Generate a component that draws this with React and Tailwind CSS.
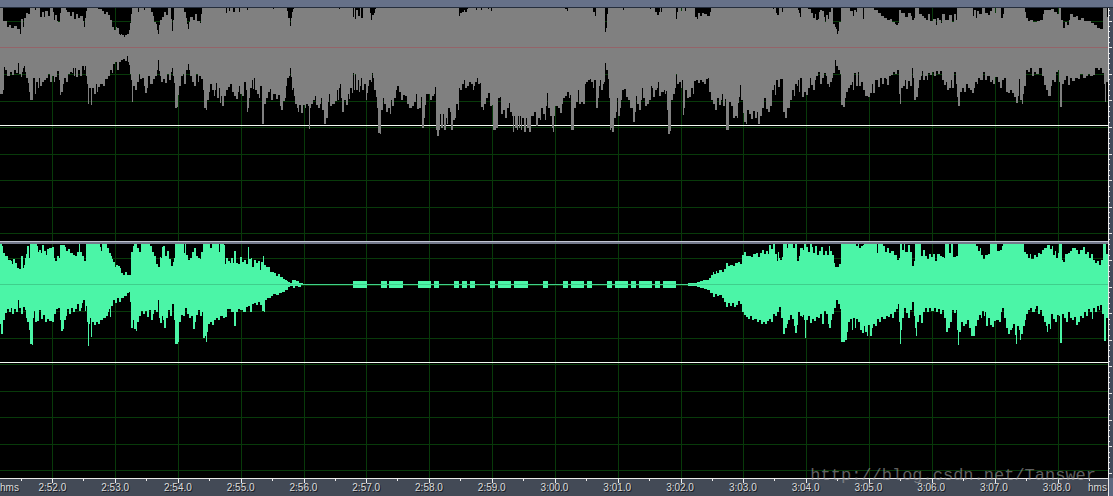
import React from "react";

// Envelope edges: "x y" pairs, each level holds until the next x
const leftTop = `0 8,3 21,7 27,9 25,11 28,14 26,17 29,20 34,21 19,23 27,24 18,26 13,28 14,30 8,35 10,36 8,40 17,42 12,44 17,45 11,48 16,50 8,53 12,54 20,55 15,57 21,58 22,60 13,61 8,
66 10,67 12,70 16,72 12,74 19,76 14,78 18,80 16,83 21,84 27,85 18,86 11,87 8,98 9,102 11,104 14,106 12,108 15,110 20,112 27,114 30,116 27,117 28,119 34,120 35,121 34,122 35,124 37,125 35,127 34,129 30,130 23,131 14,132 8,
138 12,139 8,144 10,145 8,151 12,153 16,154 22,156 24,157 30,158 34,159 25,160 20,162 17,164 12,166 15,168 8,171 19,172 31,173 20,174 8,184 12,186 18,187 24,188 29,189 22,190 17,193 20,195 14,197 21,200 23,201 14,202 8,
226 13,227 8,229 11,230 8,233 12,235 8,239 12,240 8,247 10,248 8,273 9,274 8,287 11,288 18,290 26,291 18,292 12,293 9,294 8,339 9,340 8,353 17,354 8,355 19,356 10,358 16,360 8,361 18,363 8,370 13,371 20,372 15,374 13,375 9,376 8,
459 16,460 13,462 12,464 10,465 12,467 9,468 8,476 10,477 8,481 10,482 8,488 9,489 8,491 11,492 8,565 9,567 11,568 8,593 12,595 16,596 8,605 32,606 28,607 14,608 8,623 10,624 8,650 9,651 8,655 12,657 15,659 12,660 8,661 12,662 8,
676 19,677 12,678 8,681 11,682 8,685 11,686 8,695 17,697 19,698 13,700 16,702 13,704 14,707 16,710 12,711 8,773 9,774 8,776 13,777 15,779 8,782 12,783 8,798 10,799 13,800 17,801 8,808 9,811 13,813 18,815 14,816 20,818 19,819 12,820 10,
822 11,824 17,825 22,826 15,828 19,829 12,831 8,833 24,835 27,836 29,837 34,838 31,839 22,841 8,850 11,853 16,854 10,856 12,857 8,863 19,864 8,874 10,878 13,881 16,884 18,887 20,890 19,892 22,895 24,896 25,898 23,899 10,901 13,905 17,
908 13,911 16,912 20,914 18,915 8,919 14,922 16,924 18,926 20,928 14,930 21,933 19,936 25,937 18,939 20,941 23,942 14,945 20,949 15,952 22,954 14,956 20,957 8,973 16,974 10,976 18,977 11,979 14,982 8,985 13,988 15,990 11,992 8,995 13,996 8,
1001 18,1003 14,1004 8,1025 12,1026 18,1028 21,1030 20,1033 22,1037 21,1040 20,1043 14,1044 10,1051 9,1054 12,1057 14,1059 8,1061 20,1063 28,1065 22,1067 25,1069 20,1070 14,1073 17,1076 16,1078 20,1081 18,1084 21,1088 21,1091 23,1094 25,
1097 28,1100 29,1103 8,1107 17`;

const leftBottom = `0 94,3 90,4 67,5 70,7 76,10 72,12 75,14 70,16 73,18 63,19 74,21 77,22 72,23 68,24 66,25 72,26 78,28 83,29 92,30 100,33 78,35 94,36 82,38 88,39 78,40 86,42 82,44 80,46 78,48 74,50 82,52 76,54 82,55 77,57 71,59 80,60 95,61 92,
63 84,64 78,66 82,68 74,70 72,72 73,73 68,74 76,75 68,76 77,78 70,80 76,82 66,84 70,85 66,86 76,87 84,88 104,89 88,91 105,92 88,94 94,96 84,97 92,98 87,100 84,103 86,105 79,108 76,110 70,112 73,113 64,115 62,117 70,119 62,121 60,123 59,
125 61,127 56,128 62,129 65,130 74,131 80,132 102,133 86,135 90,137 82,139 74,140 79,142 78,144 86,145 93,147 88,148 76,150 84,153 79,155 76,157 70,158 60,159 71,160 76,161 82,163 79,165 83,167 74,169 80,171 72,172 68,173 76,174 83,
175 108,177 107,178 95,179 86,181 76,183 74,184 84,186 70,188 64,189 70,190 76,192 82,194 86,196 74,198 82,199 76,201 79,203 90,204 108,206 110,207 100,209 92,210 84,212 90,214 96,215 90,216 83,217 98,219 88,220 103,221 96,222 106,
224 96,226 90,228 87,230 84,232 92,234 96,236 99,238 92,239 86,240 94,242 96,244 82,246 90,247 112,248 108,249 98,250 88,252 80,253 89,254 78,255 90,257 94,259 98,260 86,262 124,264 104,266 98,268 92,270 89,271 100,273 94,276 99,278 95,
280 106,281 110,283 101,285 98,286 86,287 78,289 76,290 68,291 77,292 90,293 88,294 96,295 104,297 108,298 112,299 105,301 113,303 105,305 108,306 104,308 106,309 129,310 108,311 104,313 100,315 96,316 105,318 108,320 104,321 98,322 110,
324 124,326 118,328 102,329 94,330 106,332 104,335 101,337 90,338 100,339 88,340 84,341 98,342 112,344 100,346 105,348 94,349 99,350 88,352 93,353 73,354 90,355 74,356 90,358 80,359 92,360 86,361 78,362 90,364 84,366 100,367 93,368 86,
369 80,371 82,372 73,373 78,374 90,376 97,377 108,378 133,380 134,381 110,383 98,384 104,386 112,388 108,390 114,391 100,392 106,394 98,396 90,397 86,399 92,401 100,403 95,405 96,407 104,409 108,412 106,414 102,416 94,417 109,419 108,
421 97,422 128,424 118,425 105,426 94,428 94,430 100,432 96,434 94,435 87,436 130,437 136,439 130,440 114,441 128,443 114,444 130,446 118,447 124,448 108,450 112,451 130,453 120,455 118,456 104,458 110,459 88,460 90,462 84,464 80,465 88,
467 86,469 82,471 84,473 90,474 86,475 82,477 78,478 84,480 83,481 107,483 110,484 104,486 98,488 93,490 106,492 105,493 130,496 128,498 98,500 97,501 114,503 110,505 118,507 108,509 103,510 112,512 116,513 132,514 116,515 128,517 130,
518 116,519 128,520 116,521 130,522 118,524 132,526 118,527 128,529 132,531 116,533 116,534 112,536 126,538 118,540 120,541 108,543 114,545 120,546 106,547 93,548 108,550 116,552 128,553 132,554 116,555 106,558 108,560 113,562 104,
563 98,565 96,567 92,569 98,570 95,571 130,573 130,574 108,576 102,578 90,579 104,581 102,583 104,585 84,586 82,588 80,590 79,591 82,593 88,594 80,596 108,598 98,599 86,600 80,601 90,603 84,604 82,605 63,606 70,608 79,609 98,610 130,
611 128,612 132,614 118,616 112,617 98,618 116,620 108,621 100,622 90,624 89,626 97,628 100,630 108,633 122,635 112,636 96,637 104,639 110,641 100,642 88,643 98,645 106,647 104,649 100,651 86,652 88,653 97,655 90,657 88,658 82,659 96,
661 92,664 90,665 94,666 91,667 110,668 134,670 131,671 100,673 94,675 88,676 74,677 84,679 82,681 88,682 80,683 115,684 108,685 90,687 98,689 97,691 88,693 94,694 81,696 80,698 83,700 80,702 82,704 84,706 79,708 78,709 92,711 100,
713 104,715 110,717 98,719 105,721 100,722 94,723 106,725 99,726 130,728 130,729 102,731 106,733 118,735 116,737 118,738 103,739 97,740 85,741 100,743 113,744 122,746 124,747 110,749 114,751 119,753 111,755 118,757 112,758 124,760 116,
762 108,764 98,766 109,768 112,770 106,772 90,774 85,775 95,776 80,778 87,780 79,783 112,785 118,787 108,790 100,792 90,794 96,795 84,797 86,798 80,799 92,800 78,802 97,804 92,806 95,808 88,810 78,811 85,813 90,815 80,816 76,818 72,
820 84,822 78,824 73,826 76,827 84,829 87,830 82,832 78,833 73,835 60,836 66,838 70,840 74,841 105,843 107,845 98,846 92,848 88,850 85,852 82,853 90,854 73,856 86,858 72,859 86,861 82,863 90,865 96,868 97,870 93,872 84,873 93,875 80,
878 87,880 78,882 84,884 78,886 79,887 85,889 76,891 75,893 72,895 74,897 70,899 94,900 104,901 88,903 86,905 80,906 89,908 81,910 86,912 68,913 78,914 100,916 97,918 88,919 80,921 76,922 71,923 80,925 76,927 80,928 73,930 75,932 72,
934 76,936 71,938 74,940 71,942 80,944 85,946 82,947 90,949 88,951 80,952 88,954 72,956 84,957 97,958 106,960 92,962 88,964 92,966 84,968 88,970 90,972 93,974 88,975 82,977 84,978 78,980 80,983 72,985 80,987 76,990 82,992 80,993 84,
995 77,998 82,1000 88,1002 80,1004 78,1006 92,1008 93,1010 90,1012 93,1014 97,1016 103,1018 96,1019 79,1020 100,1022 104,1023 94,1024 86,1026 70,1028 72,1030 68,1032 76,1034 72,1036 74,1039 68,1042 76,1044 85,1046 90,1048 96,1051 86,
1052 80,1054 82,1056 72,1058 70,1059 82,1060 107,1062 84,1064 80,1066 76,1068 85,1070 78,1072 81,1075 78,1078 79,1080 74,1083 78,1086 76,1088 74,1090 76,1093 75,1095 68,1098 70,1100 68,1102 73,1104 84,1105 102,1106 82`;

const rightTop = `0 244,2 246,3 253,5 256,8 260,11 261,12 264,13 259,15 263,17 268,19 269,21 256,23 268,24 265,25 258,26 254,27 246,29 258,30 244,37 246,38 252,39 250,41 253,42 245,44 251,46 255,47 249,49 248,52 247,54 258,55 261,57 256,59 258,60 245,
65 247,66 251,68 249,70 253,73 255,75 256,77 252,79 244,80 252,82 256,84 261,86 244,100 247,101 251,102 244,107 248,109 253,111 256,112 259,113 262,115 267,116 265,118 266,120 268,121 273,123 275,125 272,127 275,131 252,133 246,134 244,
137 248,139 252,141 244,150 246,152 252,154 256,156 264,158 267,160 257,161 258,162 247,163 246,165 256,167 251,169 259,171 266,173 262,174 258,175 244,184 253,185 244,186 255,188 260,190 258,192 252,194 248,196 256,198 258,200 259,
201 252,203 244,210 248,212 244,219 252,220 244,224 245,225 264,226 258,228 261,230 263,231 258,233 263,234 251,236 263,238 264,240 257,242 262,244 260,246 264,248 247,249 259,251 258,252 267,254 260,256 263,258 261,260 270,261 262,
263 256,264 265,266 267,270 272,274 273,276 276,278 274,280 277,283 279,285 280,287 281,288 282,290 283,292 280,296 281,299 283,303 284,688 283,697 282,700 281,703 280,709 278,711 275,713 272,714 274,716 271,717 273,719 270,722 272,
724 269,726 263,728 266,730 265,733 266,735 263,738 262,740 264,742 255,744 252,746 256,751 257,753 254,756 253,758 257,760 253,762 250,764 254,766 251,768 254,769 245,771 249,773 244,775 254,777 261,778 252,779 258,780 260,782 257,
783 244,787 248,788 244,793 248,795 244,797 261,799 256,800 248,803 250,804 244,806 247,808 252,810 244,812 247,813 253,815 246,817 255,819 251,821 247,823 255,825 251,827 255,829 246,830 251,832 255,834 263,835 267,839 264,841 244,
856 246,858 244,859 248,861 246,863 245,864 244,877 253,878 244,883 246,885 252,887 248,889 253,891 251,894 255,897 260,899 258,900 244,902 250,904 244,905 252,908 245,910 252,912 266,914 261,915 244,921 256,923 250,925 256,927 259,
929 254,931 257,933 254,935 261,937 254,940 256,942 257,944 258,945 244,949 253,951 244,953 257,956 256,958 244,976 246,978 251,980 248,981 255,983 259,985 255,988 254,990 244,997 251,1000 250,1002 246,1003 244,1024 252,1026 254,
1028 258,1030 254,1031 259,1034 255,1036 257,1038 253,1040 254,1042 250,1044 248,1047 245,1050 249,1052 246,1053 255,1055 251,1056 258,1058 253,1059 244,1062 260,1063 262,1065 254,1068 253,1070 251,1072 248,1076 250,1078 254,1080 250,
1083 247,1085 254,1087 252,1089 258,1091 254,1093 260,1095 263,1097 261,1099 265,1101 260,1103 244,1106 254`;

const rightBottom = `0 324,1 334,3 320,5 313,7 309,9 312,11 308,12 314,14 309,16 312,18 300,19 308,21 314,23 307,25 310,26 318,27 322,29 330,30 344,32 345,33 318,34 311,35 322,37 321,39 310,41 319,43 315,45 322,47 319,49 321,52 322,54 314,56 309,58 308,
60 320,61 331,63 329,64 320,66 316,67 309,69 314,71 308,73 312,75 309,77 304,79 311,81 308,82 303,83 300,85 311,86 306,87 322,88 346,89 324,90 318,91 337,92 322,94 325,96 322,98 324,100 320,103 318,106 316,108 312,109 309,110 317,111 306,
113 300,115 303,117 298,119 302,121 298,124 296,127 293,129 292,130 302,131 328,133 320,134 329,136 331,137 322,139 316,141 311,143 314,145 311,147 317,149 310,151 320,153 314,154 310,156 312,158 300,159 318,160 323,162 316,163 320,
164 328,166 318,168 310,170 316,172 304,174 320,175 344,178 342,179 322,181 315,183 316,185 308,187 314,189 318,191 316,193 329,195 322,196 315,198 310,200 316,202 312,203 338,205 336,206 342,207 332,208 324,210 322,212 325,214 320,
216 318,218 320,220 316,223 318,225 317,227 309,231 312,234 326,236 312,238 309,240 310,243 312,246 307,248 306,250 312,252 304,254 303,256 305,258 302,260 305,262 311,264 312,265 300,267 298,271 296,273 294,276 295,279 293,282 292,
285 290,288 287,290 286,293 288,295 286,298 287,301 285,688 286,697 287,700 288,704 289,707 290,710 293,713 297,715 294,717 296,719 295,722 298,724 302,726 307,728 303,730 306,732 303,734 307,736 305,738 301,740 304,742 312,744 315,
746 317,748 319,750 316,752 320,754 319,757 322,759 320,761 324,763 322,765 324,767 321,769 319,771 322,773 314,775 316,777 312,779 307,781 318,783 334,785 328,787 324,788 320,790 315,792 319,794 326,795 333,797 325,798 312,800 316,
802 317,803 315,804 320,805 338,806 320,808 316,810 323,812 319,814 321,816 317,818 318,820 314,822 324,824 311,826 314,828 324,829 328,831 320,832 314,834 308,836 300,838 304,840 309,841 342,845 340,847 332,848 322,850 319,852 330,
853 318,855 328,856 319,858 322,860 330,862 333,864 326,865 332,867 336,868 325,870 336,872 328,873 324,875 326,877 319,879 322,881 317,883 319,886 316,888 317,890 314,892 318,894 312,896 309,898 304,899 322,900 344,901 330,902 318,
904 308,906 313,908 318,910 310,912 302,914 316,915 328,916 336,917 322,919 315,921 323,923 312,925 308,927 312,929 308,931 311,934 308,936 312,938 309,940 314,942 310,944 318,946 332,948 328,950 322,952 310,954 313,956 310,957 330,
958 345,959 332,961 322,963 326,965 324,967 320,969 328,971 336,975 326,977 320,979 315,981 318,982 311,984 316,985 312,986 326,988 318,990 325,992 327,994 321,996 320,999 322,1001 312,1002 308,1004 318,1006 328,1008 334,1010 330,
1012 328,1013 324,1015 335,1016 344,1017 326,1019 330,1020 340,1021 334,1023 326,1025 320,1026 314,1028 310,1030 308,1032 312,1035 309,1036 306,1038 314,1040 310,1042 316,1044 322,1046 326,1047 332,1048 324,1050 329,1051 314,1053 319,
1055 322,1057 315,1059 316,1060 343,1062 314,1064 318,1066 322,1068 312,1070 318,1072 320,1074 317,1076 325,1078 322,1080 316,1082 318,1084 312,1086 316,1088 309,1090 312,1092 319,1093 308,1095 312,1097 306,1099 310,1100 305,1102 314,
1104 341,1106 318`;

// Low-level bursts in the quiet part of the right channel: [start, end]
const bursts = [
  [353, 367], [381, 387], [389, 403], [418, 431], [434, 439], [454, 459], [462, 467],
  [470, 475], [490, 495], [498, 511], [514, 528], [543, 548], [563, 568], [571, 584],
  [587, 592], [607, 612], [615, 628], [631, 636], [639, 652], [655, 660], [663, 676],
];

const times = [
  "2:52.0", "2:53.0", "2:54.0", "2:55.0", "2:56.0", "2:57.0", "2:58.0", "2:59.0", "3:00.0",
  "3:01.0", "3:02.0", "3:03.0", "3:04.0", "3:05.0", "3:06.0", "3:07.0", "3:08.0",
];

const WIDTH = 1108;
const secondX = (i) => Math.round(52.2 + i * 62.84);
const levelY = (i) => Math.round(21 + i * 26.55);

const parse = (text) => text.split(",").map((pair) => pair.trim().split(" ").map(Number));

function envelopePath(topText, bottomText) {
  const top = parse(topText);
  const bottom = parse(bottomText);
  let d = `M0 ${top[0][1]}`;
  top.forEach(([x, y]) => {
    d += `H${x}V${y}`;
  });
  d += `H${WIDTH}V${bottom[bottom.length - 1][1]}`;
  for (let i = bottom.length - 1; i > 0; i--) {
    d += `H${bottom[i][0]}V${bottom[i - 1][1]}`;
  }
  return d + "H0Z";
}

function Grid({ top, height, offset }) {
  return (
    <g fill="#083a0a">
      {times.map((time, i) => (
        <rect key={time} x={secondX(i)} y={top} width="1" height={height} />
      ))}
      {[0, 1, 2, 3, 4, 5, 6, 7, 8].map((i) => (
        <rect key={i} x="0" y={levelY(i) + offset} width={WIDTH} height="1" />
      ))}
    </g>
  );
}

function LeftChannel() {
  return (
    <svg
      className="block w-full h-[233px] bg-black"
      viewBox="0 8 1108 233"
      preserveAspectRatio="none"
      shapeRendering="crispEdges"
      role="img"
      aria-label="Left channel"
    >
      <Grid top={8} height={233} offset={0} />
      <rect x="0" y="125" width={WIDTH} height="1" fill="#f4fbf4" />
      <path d={envelopePath(leftTop, leftBottom)} fill="#808080" />
      <rect x="0" y="47" width={WIDTH} height="1" fill="#946469" />
    </svg>
  );
}

function RightChannel() {
  return (
    <svg
      className="block w-full h-[234px] bg-black"
      viewBox="0 244 1108 234"
      preserveAspectRatio="none"
      shapeRendering="crispEdges"
      role="img"
      aria-label="Right channel"
    >
      <Grid top={244} height={234} offset={237} />
      <rect x="0" y="362" width={WIDTH} height="1" fill="#f4fbf4" />
      <path d={envelopePath(rightTop, rightBottom)} fill="#4bf5a7" />
      {bursts.map(([start, end]) => (
        <rect key={start} x={start} y="281" width={end - start} height="7" fill="#4bf5a7" />
      ))}
      <rect x="0" y="284" width={WIDTH} height="1" fill="#3fcf8c" />
    </svg>
  );
}

function TimeRuler() {
  return (
    <div className="h-[18px] overflow-hidden border-t border-[#e8e8e8] bg-[#434a56]">
      <svg
        className="block w-full h-[4px]"
        viewBox="0 0 1108 4"
        preserveAspectRatio="none"
        shapeRendering="crispEdges"
        fill="#f0f0f0"
      >
        <rect x="21" y="0" width="1" height="2" />
        {times.map((time, i) => (
          <g key={time}>
            <rect x={secondX(i)} y="0" width="1" height="4" />
            <rect x={secondX(i) + 31} y="0" width="1" height="2" />
          </g>
        ))}
      </svg>
      <div className="flex text-[10px] leading-[10px] text-[#dcdcdc] [text-shadow:1px_1px_0_#15181d]">
        <span className="w-[21px] shrink-0">hms</span>
        {times.map((time) => (
          <span key={time} className="flex-1 text-center">
            {time}
          </span>
        ))}
        <span className="w-[20px] shrink-0">hms</span>
      </div>
    </div>
  );
}

function LevelRuler() {
  const ticks = [];
  for (let i = 0; i < 88; i++) {
    // every fifth tick is a major one, lined up with the grid
    const y = 10 + i * 5.32;
    if (y < 476) ticks.push({ y: Math.round(y), major: i % 5 === 2 });
  }
  return (
    <div className="flex w-[5px] shrink-0 flex-col border-l border-[#e8e8e8] bg-[#434b5b]">
      <svg
        className="block w-full h-[470px]"
        viewBox="0 8 4 470"
        preserveAspectRatio="none"
        shapeRendering="crispEdges"
        fill="#e8e8e8"
      >
        {ticks.map(({ y, major }) => (
          <rect key={y} x="0" y={y} width={major ? 3 : 1} height="1" />
        ))}
      </svg>
      <div className="flex-1 bg-[#5d6880]" />
    </div>
  );
}

function App() {
  return (
    <div className="relative flex min-h-screen flex-col bg-black font-['Liberation_Sans',Arial,sans-serif]">
      {/* Overview strip */}
      <div className="h-[8px] border-b border-[#252e3d] bg-[#667189]" />

      <div className="flex">
        {/* Tracks */}
        <main className="relative min-w-0 flex-1">
          <LeftChannel />
          <div className="h-[3px] border-t border-[#c3c6d3] bg-[#73788a]" />
          <RightChannel />
          <TimeRuler />

          {/* Watermark */}
          <p className="pointer-events-none absolute right-[12px] bottom-[11px] font-['Liberation_Mono',monospace] text-[17px] leading-[18px] text-[#a0a0a0]/60">
            http://blog.csdn.net/Tanswer
          </p>
        </main>

        <LevelRuler />
      </div>
    </div>
  );
}

export default App;
